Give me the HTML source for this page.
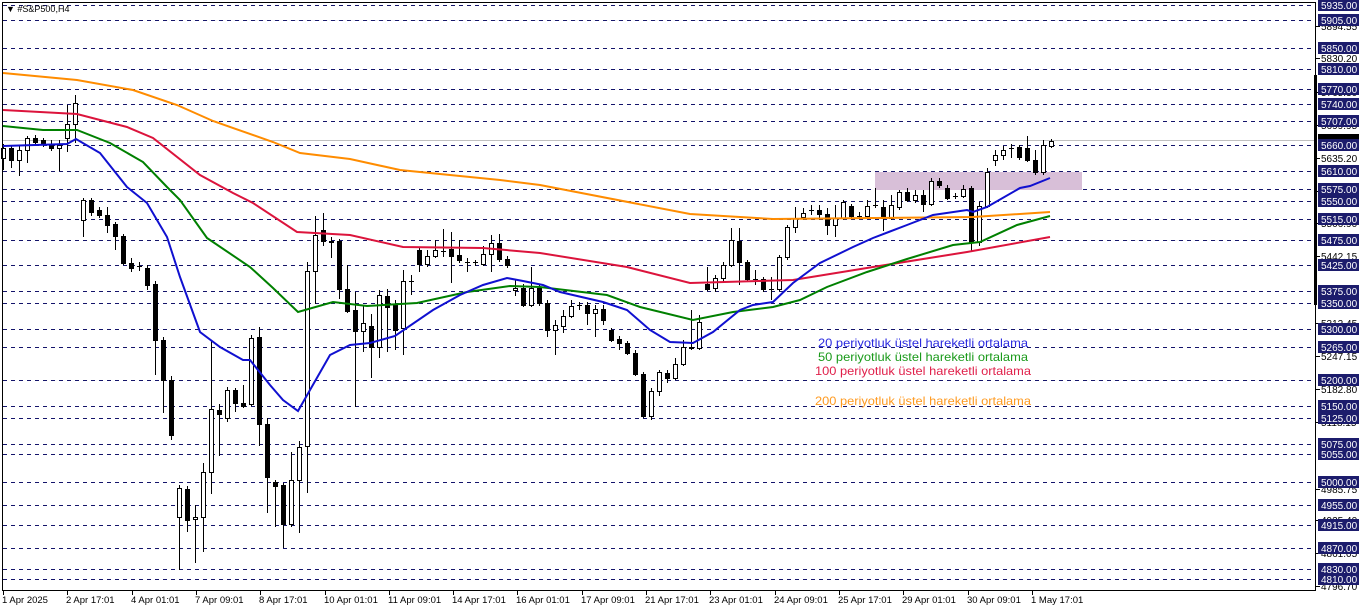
<!DOCTYPE html>
<html><head><meta charset="utf-8"><style>
html,body{margin:0;padding:0;background:#fff;width:1362px;height:611px;overflow:hidden}
svg{display:block;font-family:"Liberation Sans",sans-serif}
</style></head><body>
<svg id="s" width="1362" height="611" xmlns="http://www.w3.org/2000/svg" shape-rendering="crispEdges"></svg>
<script>
var S=document.getElementById('s');var h='';
function Y(p){return 5+(5935-p)*0.5102;}
var lv=[5935,5905,5850,5810,5770,5740,5707,5660,5610,5575,5550,5515,5475,5425,5375,5350,5300,5265,5200,5150,5125,5075,5055,5000,4955,4915,4870,4830,4810];
lv.forEach(function(p){var y=Math.round(Y(p))+0.5;h+='<line x1="3" y1="'+y+'" x2="1315" y2="'+y+'" stroke="#14146a" stroke-dasharray="4,4"/>';});
h+='<line x1="3" y1="140.5" x2="1315" y2="140.5" stroke="#c0c0c0"/>';
h+='<rect x="875" y="172" width="207" height="18" fill="#d8bfd8"/>';
var C=[[158,148,144,170],[148,160,145,168],[160,150,145,176],[150,138,136,163],[138,142,135,146],[140,144,138,147],[145,148,140,151],[148,145,140,171],[138,124,105,152],[124,103,95,143],
[220,200,198,237],[200,212,198,216],[210,215,207,218],[215,225,207,233],[224,236,222,250],[236,263,234,265],[263,268,258,272],[266,266,262,271],[268,285,265,290],[284,340,281,375],
[340,380,337,413],[380,435,376,440],[517,488,485,570],[489,520,486,532],[519,517,505,563],[517,472,463,552],[472,409,341,494],[410,414,404,456],[418,390,387,422],[390,403,388,412],
[403,406,385,408],[404,338,335,406],[337,424,327,446],[424,477,418,513],[482,486,480,527],[485,524,483,548],[524,480,452,527],[480,447,441,533],[446,271,262,493],[271,235,216,304],
[230,241,213,246],[241,242,237,258],[241,289,239,299],[289,311,265,313],[310,331,292,407],[331,323,306,352],[326,347,314,378],[347,295,290,358],[296,307,289,352],[305,330,300,350],
[328,281,270,355],[281,281,275,295],[250,264,248,272],[264,256,250,267],[256,250,240,258],[251,251,229,257],[249,256,232,283],[255,260,240,263],[262,262,258,272],[262,262,260,266],
[264,254,246,266],[254,243,235,272],[243,259,234,262],[259,265,256,268],[290,288,280,296],[288,305,284,307],[305,288,267,307],[288,303,285,306],[303,330,300,337],[330,325,320,355],
[326,316,310,333],[316,306,300,318],[305,305,302,310],[305,313,302,325],[313,309,305,337],[309,320,305,325],[330,340,328,342],[339,343,336,350],[343,353,341,355],[353,374,350,376],
[374,416,372,418],[416,391,388,420],[391,372,370,396],[373,378,370,383],[378,364,358,380],[364,347,340,366],[348,347,310,350],[348,322,315,350],[284,289,267,291],[288,278,275,292],
[278,265,262,282],[265,240,228,267],[241,262,228,285],[262,279,260,281],[279,279,270,285],[279,289,277,292],[289,289,277,300],[289,257,255,291],[257,227,225,260],[227,218,207,233],
[217,213,208,220],[210,210,205,215],[210,214,205,220],[214,225,208,235],[225,218,205,237],[218,202,200,220],[206,216,204,218],[216,216,212,218],[216,206,200,218],[205,205,188,208],
[207,218,200,231],[218,205,195,220],[207,192,190,210],[192,200,188,202],[200,195,190,203],[195,204,190,212],[204,181,178,206],[181,185,178,188],[188,198,185,200],[196,196,193,199],
[196,189,185,198],[188,242,186,251],[242,206,202,246],[206,172,168,208],[160,155,150,166],[155,150,146,160],[148,148,144,158],[147,157,145,160],[148,160,136,162],[160,172,150,175],
[172,145,140,175],[146,141,139,148]];
C.forEach(function(c,i){var x=3+8*i,o=c[0],cl=c[1],t=Math.min(o,cl),b=Math.max(o,cl);
h+='<line x1="'+(x+0.5)+'" y1="'+c[2]+'" x2="'+(x+0.5)+'" y2="'+c[3]+'" stroke="#000"/>';
if(b-t<1){h+='<line x1="'+(x-2)+'" y1="'+(t+0.5)+'" x2="'+(x+3)+'" y2="'+(t+0.5)+'" stroke="#000"/>';}
else{var bull=cl<o;h+='<rect x="'+(x-1.5)+'" y="'+(t+0.5)+'" width="4" height="'+(b-t)+'" fill="'+(bull?'#fff':'#000')+'" stroke="#000"/>';}});
function pl(pts,col){h+='<polyline fill="none" stroke="'+col+'" stroke-width="2" shape-rendering="auto" points="'+pts+'"/>';}
pl("3,73 77,80 133,90 177,105 213,121 273,142 300,153 350,159 400,170 500,180 540,185 690,214 773,219 873,218 973,217 1050,212","#ff8c00");
pl("3,110 77,114 127,127 153,138 200,175 233,193 253,203 297,232 350,235 403,247 483,248 540,253 627,267 690,283 793,280 873,267 967,252 1050,237","#dc143c");
pl("3,126 43,130 77,130 110,143 143,162 167,187 180,200 207,238 250,267 273,288 298,312 333,302 367,306 417,303 467,292 510,286 540,287 607,295 640,307 693,320 733,312 773,307 800,300 827,287 867,272 907,259 953,245 980,242 1017,225 1050,216","#008000");
pl("3,146 67,144 76,139 100,153 127,187 147,203 167,237 180,277 200,332 220,347 243,360 250,360 270,385 283,400 298,411 310,390 330,355 350,345 370,343 395,336 433,310 460,295 483,285 507,278 523,281 543,285 560,292 603,302 627,310 650,330 670,342 693,343 713,332 740,310 753,305 773,302 793,283 820,263 853,247 873,238 907,225 933,215 967,210 973,212 987,207 1020,188 1030,186 1050,178","#1010d0");
var L=[["20 periyotluk üstel hareketli ortalama","#2a2ae0",347,818,210],["50 periyotluk üstel hareketli ortalama","#1a9a1a",361,818,210],["100 periyotluk üstel hareketli ortalama","#e0204a",375,815,216],["200 periyotluk üstel hareketli ortalama","#ff9a20",405,815,216]];
L.forEach(function(l){h+='<text x="'+l[3]+'" y="'+l[2]+'" font-size="12" textLength="'+l[4]+'" lengthAdjust="spacingAndGlyphs" fill="'+l[1]+'">'+l[0]+'</text>';});
h+='<line x1="2.5" y1="2" x2="2.5" y2="590" stroke="#000"/><line x1="2" y1="590.5" x2="1316" y2="590.5" stroke="#000"/><line x1="1315.5" y1="2" x2="1315.5" y2="591" stroke="#000"/><line x1="2" y1="2.5" x2="1316" y2="2.5" stroke="#000"/>';
h+='<rect x="1314" y="75" width="3" height="230" fill="#000"/>';
h+='<text x="6" y="12" font-size="9" fill="#000">▼ #S&amp;P500,H4</text>';
[5894.55,5830.20,5765.30,5699.95,5635.20,5570.60,5506.90,5442.15,5312.45,5247.15,5182.80,5118.15,4985.75,4925.40,4861.05,4796.70].forEach(function(p){var y=Math.round(Y(p));
h+='<line x1="1316" y1="'+(y+0.5)+'" x2="1320" y2="'+(y+0.5)+'" stroke="#000"/><text x="1321" y="'+(y+4)+'" font-size="10" fill="#000">'+p.toFixed(2)+'</text>';});
h+='<rect x="1318" y="134" width="41" height="11" fill="#000"/>';
lv.forEach(function(p){var y=Math.round(Y(p));h+='<rect x="1318" y="'+(y-6)+'" width="41" height="12" fill="#1c1c6c"/><text x="1321" y="'+(y+4)+'" font-size="10" fill="#fff">'+p.toFixed(2)+'</text>';});
var T=["1 Apr 2025","2 Apr 17:01","4 Apr 01:01","7 Apr 09:01","8 Apr 17:01","10 Apr 01:01","11 Apr 09:01","14 Apr 17:01","16 Apr 01:01","17 Apr 09:01","21 Apr 17:01","23 Apr 01:01","24 Apr 09:01","25 Apr 17:01","29 Apr 01:01","30 Apr 09:01","1 May 17:01"];
T.forEach(function(t,i){var x=Math.round(3+64.3*i);h+='<line x1="'+(x+0.5)+'" y1="591" x2="'+(x+0.5)+'" y2="595" stroke="#000"/><text x="'+(x-1)+'" y="603" font-size="9.5" fill="#000">'+t+'</text>';});
S.innerHTML=h;
</script>
</body></html>
